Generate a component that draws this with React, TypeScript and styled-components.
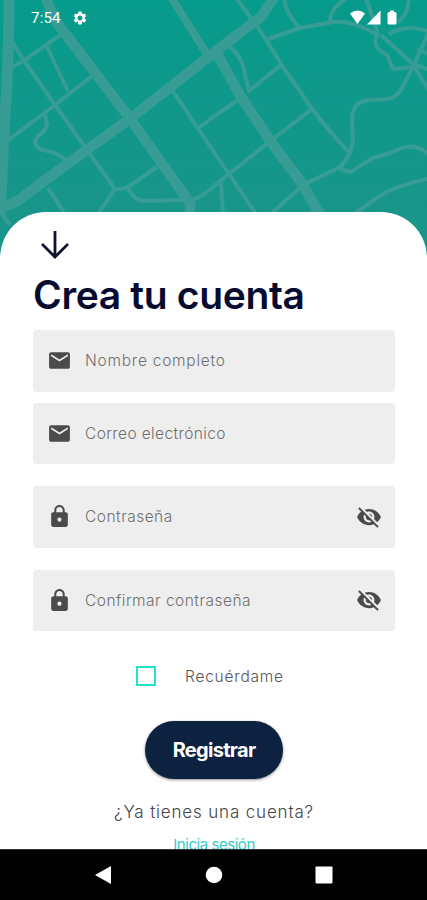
import React from "react";
import styled, { createGlobalStyle } from "styled-components";
import { MdEmail, MdLock, MdSettings, MdVisibilityOff } from "react-icons/md";

const GlobalStyle = createGlobalStyle`
  * { box-sizing: border-box; }
  html, body { margin: 0; padding: 0; overflow: hidden; background: #fff; }
  button, input { font: inherit; }
`;

const Screen = styled.div`
  width: 427px;
  height: 900px;
  display: flex;
  flex-direction: column;
  overflow: hidden;
  background: #fff;
  font-family: Inter, "Liberation Sans", sans-serif;
`;

const Hero = styled.header`
  position: relative;
  flex: 0 0 262px;
  background: linear-gradient(#069b8c, #19958a 212px);
`;

const MapArt = styled.svg`
  position: absolute;
  inset: 0;
  width: 100%;
  height: 100%;
`;

const StatusBar = styled.div`
  position: relative;
  display: flex;
  align-items: center;
  justify-content: space-between;
  height: 36px;
  padding: 0 28px 0 31px;
  color: #fff;
`;

const StatusGroup = styled.div`
  display: flex;
  align-items: center;
  gap: 11px;
`;

const Clock = styled.span`
  font: 400 15px Roboto, sans-serif;
  letter-spacing: 0.2px;
`;

const Sheet = styled.main`
  position: relative;
  flex: 0 0 637px;
  margin-top: -50px;
  padding: 17px 32px 0 33px;
  border-radius: 46px 46px 0 0;
  background: #fff;
  overflow: hidden;
`;

const BackButton = styled.button`
  display: block;
  height: 32px;
  margin-left: 7px;
  padding: 0;
  border: 0;
  background: none;
`;

const Title = styled.h1`
  margin: 11px 0 0;
  height: 45px;
  font-size: 39px;
  line-height: 45px;
  font-weight: 600;
  letter-spacing: -0.34px;
  color: #080b30;
  white-space: nowrap;
`;

const Field = styled.label<{ $gap: number }>`
  display: flex;
  align-items: center;
  height: 61.5px;
  margin-top: ${(p) => p.$gap}px;
  padding: 0 13px 0 14px;
  border-radius: 4px;
  background: #eee;
  color: #4b4b4b;
`;

const Placeholder = styled.span<{ $track: number }>`
  flex: 1;
  margin-left: 13px;
  font-size: 15.5px;
  font-weight: 300;
  letter-spacing: ${(p) => p.$track}px;
  color: #707070;
  white-space: nowrap;
`;

const Remember = styled.label`
  display: flex;
  align-items: center;
  height: 24px;
  margin: 33px 0 0 102.5px;
  gap: 29.5px;
`;

const Box = styled.span`
  width: 20px;
  height: 20px;
  border: 2px solid #25dfd0;
  background: #fff;
`;

const RememberText = styled.span`
  font-size: 15.5px;
  font-weight: 300;
  letter-spacing: 0.78px;
  color: #555;
`;

const Submit = styled.button`
  display: flex;
  align-items: center;
  justify-content: center;
  width: 138px;
  height: 58px;
  margin: 33px 0 0 112px;
  padding: 0;
  border: 0;
  border-radius: 29px;
  background: #0d2140;
  box-shadow: 0 1px 3px rgba(0, 0, 0, 0.45);
  color: #fff;
`;

const SubmitText = styled.span`
  font-size: 20px;
  font-weight: 700;
  letter-spacing: -0.7px;
  white-space: nowrap;
`;

const Footer = styled.div`
  display: flex;
  flex-direction: column;
  align-items: center;
  margin: 21.5px 0 0 0;
`;

const Question = styled.span`
  height: 22px;
  font-size: 17px;
  line-height: 22px;
  font-weight: 300;
  letter-spacing: 0.83px;
  color: #444;
  white-space: nowrap;
`;

const LoginLink = styled.a`
  margin-top: 12px;
  font-size: 15px;
  line-height: 20px;
  letter-spacing: -0.45px;
  color: #35ccca;
  white-space: nowrap;
`;

const NavBar = styled.nav`
  position: relative;
  flex: 1;
  display: flex;
  align-items: center;
  justify-content: space-between;
  padding: 0 94px;
  border-top: 1px solid #333;
  background: #000;
`;

const majorRoads = [
  "M45-5Q54 22 67 36L131 120L190 203V216",
  "M275-5L262 16L216 51L131 118L63 167L24 196Q12 207-5 207",
  "M216 52L241 97L271 142L301 182L321 216",
];

const minorRoads = [
  "M12 67L25 60L63 33",
  "M13 43L25 62L55 105L87 150L115 189Q120 190 128 187L157 167",
  "M115 189L98 214",
  "M128 189Q134 200 144 201L184 200Q195 203 213 187L230 173L268 143L313 108",
  "M47 47L68 91",
  "M93 75L55 105L7 141",
  "M45 115L47 124Q46 131 38 136Q31 145 42 150Q57 151 67 162",
  "M48 188L65 214",
  "M0 212L10 225",
  "M172 90L197 127L256 214",
  "M197 129L216 115L238 100",
  "M221 183L223 214",
  "M271 214L303 185L340 167Q351 157 353 140L352 120Q352 101 370 100L386 99Q396 98 400 91L413 67L430 29",
  "M318 117L349 153",
  "M236-2L258 27L285 70L313 110L331 133",
  "M268 39L300 28L333 22Q353 20 378 35",
  "M284-2Q285 13 300 28",
  "M330 22Q330 8 347-2",
  "M366-2L378 34Q370 47 387 55L393 69L413 67",
  "M381 35L413 64L430 70",
  "M389 34Q407 23 430 32",
  "M409-2Q408 15 398 22",
  "M413 65L430 92",
  "M417 49L430 55",
  "M230 47Q243 57 245 75L249 91L281 65",
  "M338 168L351 172Q362 164 373 158L391 153Q414 139 430 156",
  "M354 214L386 192Q405 184 430 178",
];

const StreetMap = () => (
  <MapArt viewBox="0 0 427 262" fill="none" stroke="#379d94" strokeLinejoin="round">
    <path d="M9-3Q9 65 4 130Q2 180 0 215" strokeWidth="11" />
    <path d="M171-3L208 56" strokeWidth="8" />
    {majorRoads.map((d) => (
      <path key={d} d={d} strokeWidth="10.5" />
    ))}
    {minorRoads.map((d) => (
      <path key={d} d={d} strokeWidth="4" />
    ))}
  </MapArt>
);

const SignalIcons = () => (
  <svg width="50" height="18" viewBox="0 0 50 18" fill="#fff">
    <path d="M1 4.5Q8.500-1.500 16 4.500L8.500 15Z" />
    <path d="M31.500 1.500V15.500H18Z" />
    <path d="M41 1.500H45V3H46Q47.500 3 47.500 4.500V14Q47.500 15.500 46 15.500H40Q38.500 15.500 38.500 14V4.500Q38.500 3 40 3H41Z" />
  </svg>
);

const fields = [
  { label: "Nombre completo", gap: 13, track: 0.75, secret: false },
  { label: "Correo electrónico", gap: 11, track: 0.38, secret: false },
  { label: "Contraseña", gap: 22, track: 0.48, secret: true },
  { label: "Confirmar contraseña", gap: 22, track: 0.47, secret: true },
];

export default function App() {
  return (
    <>
      <GlobalStyle />
      <Screen>
        <Hero>
          <StreetMap />
          <StatusBar>
            <StatusGroup>
              <Clock>7:54</Clock>
              <MdSettings size={16} />
            </StatusGroup>
            <SignalIcons />
          </StatusBar>
        </Hero>
        <Sheet>
          <BackButton aria-label="Volver">
            <svg width="30" height="32" viewBox="0 0 30 32" fill="none" stroke="#10112b" strokeWidth="2.800">
              <path d="M15 2V28M2 15L15 28L28 15" />
            </svg>
          </BackButton>
          <Title>Crea tu cuenta</Title>
          {fields.map((f) => (
            <Field key={f.label} $gap={f.gap}>
              {f.secret ? <MdLock size={25} /> : <MdEmail size={25} />}
              <Placeholder $track={f.track}>{f.label}</Placeholder>
              {f.secret && <MdVisibilityOff size={26} />}
            </Field>
          ))}
          <Remember>
            <Box />
            <RememberText>Recuérdame</RememberText>
          </Remember>
          <Submit>
            <SubmitText>Registrar</SubmitText>
          </Submit>
          <Footer>
            <Question>¿Ya tienes una cuenta?</Question>
            <LoginLink>Inicia sesión</LoginLink>
          </Footer>
        </Sheet>
        <NavBar>
          <svg width="18" height="20" viewBox="0 0 18 20" fill="#fff">
            <path d="M1 10L17 1V19Z" />
          </svg>
          <svg width="18" height="18" viewBox="0 0 18 18" fill="#fff">
            <circle cx="9" cy="9" r="8.300" />
          </svg>
          <svg width="18" height="18" viewBox="0 0 18 18" fill="#fff">
            <rect x="0.500" y="0.500" width="17" height="17" rx="1" />
          </svg>
        </NavBar>
      </Screen>
    </>
  );
}
